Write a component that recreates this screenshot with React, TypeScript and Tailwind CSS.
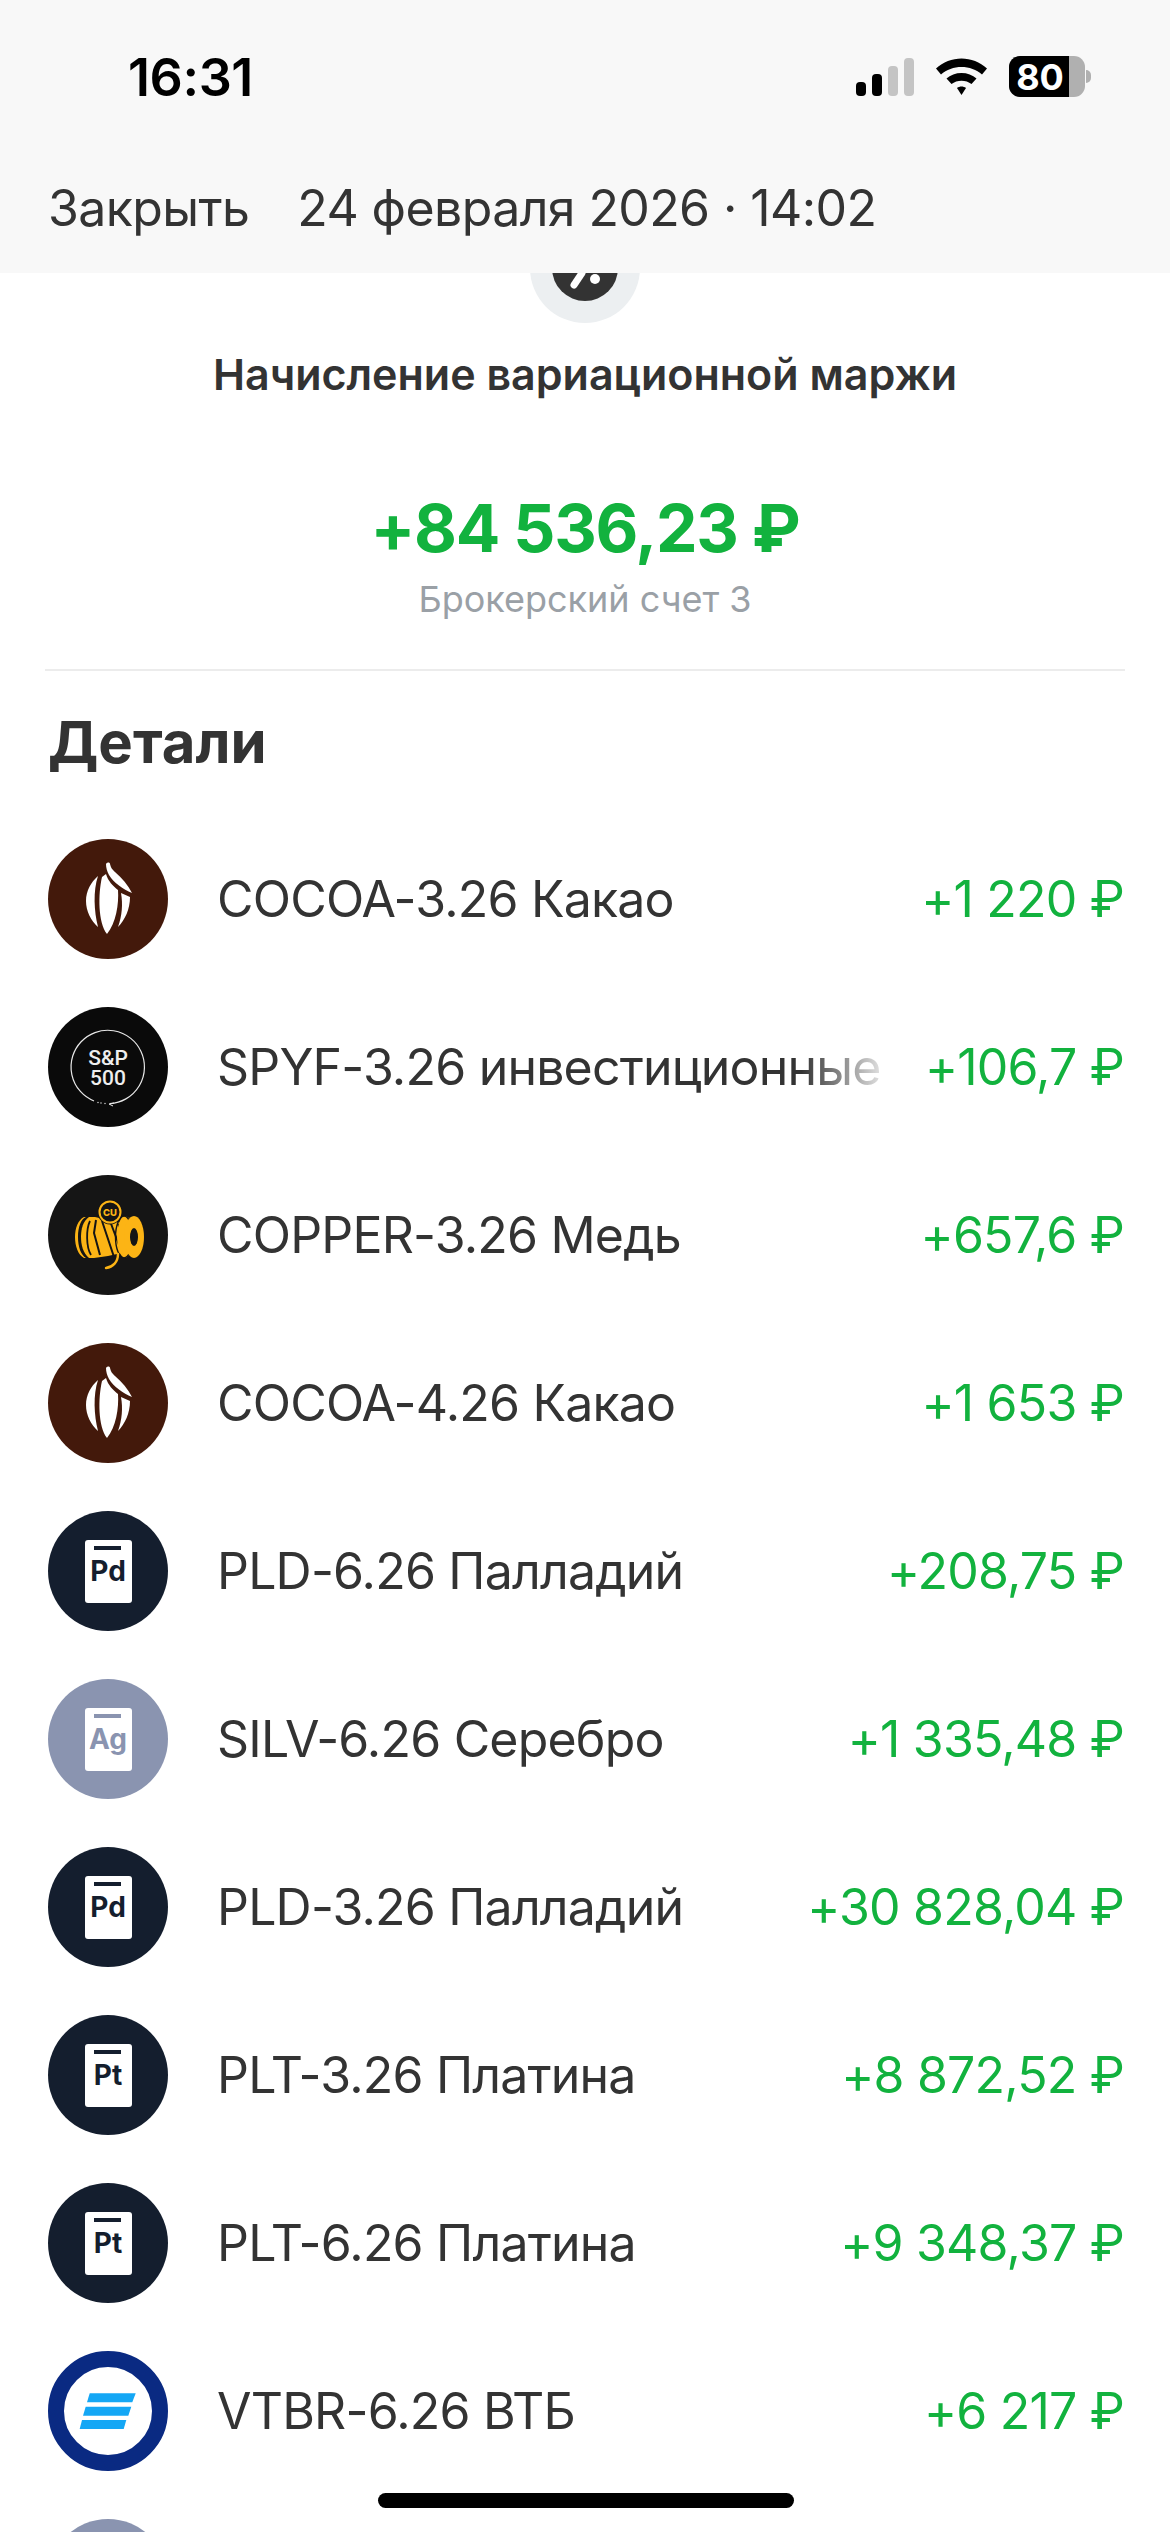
import React from "react";

function Cocoa() {
  return (
    <div className="w-[120px] h-[120px] shrink-0 rounded-full bg-[#43190b]">
      <svg viewBox="0 0 120 120" className="w-full h-full" fill="#ffffff">
        <path d="M58 25 C59 23 62 23 62 25 C63 29 64 30 67 33 C74 39 80 46 84 54 C75 50 66 44 61 36 C59 32 58 29 58 25 Z" />
        <path d="M50 37 C43 43 38 52 38 62 C38 72 43 82 50 88 C46 72 45 52 50 37 Z" />
        <path d="M54 38 L58 35 C60 42 65 47 70 51 C71 65 68 84 59 95 C50 84 50 55 54 38 Z" />
        <path d="M73 54 L82 58 C82 70 77 81 70 88 C74 77 75 65 73 54 Z" />
      </svg>
    </div>
  );
}

function Spx() {
  return (
    <div className="w-[120px] h-[120px] shrink-0 rounded-full bg-[#0a0a0a]">
      <svg viewBox="0 0 120 120" className="w-full h-full">
        <path d="M62 96.6 A36.7 36.7 0 1 0 46 94" fill="none" stroke="#e8e8e8" strokeWidth="1.2" />
        <path d="M66 96 L61 97 L65 99" fill="none" stroke="#e8e8e8" strokeWidth="1" />
        <circle cx="57" cy="96.5" r="0.7" fill="#e8e8e8" />
        <circle cx="53" cy="96" r="0.7" fill="#e8e8e8" />
        <circle cx="50" cy="95.5" r="0.7" fill="#e8e8e8" />
        <text x="60" y="58" textAnchor="middle" fontFamily="Roboto, sans-serif" fontWeight="500" fontSize="21" fill="#eeeeee">S&amp;P</text>
        <text x="60" y="77.5" textAnchor="middle" fontFamily="Roboto, sans-serif" fontWeight="500" fontSize="21" fill="#eeeeee">500</text>
      </svg>
    </div>
  );
}

function Copper() {
  return (
    <div className="w-[120px] h-[120px] shrink-0 rounded-full bg-[#151515]">
      <svg viewBox="0 0 120 120" className="w-full h-full">
        <path d="M30 62 C30 52 33 44 38 42 L36 42 C30 45 27 53 27 62 C27 71 30 80 36 83 L38 83 C33 80 30 72 30 62 Z" fill="#fcb415" />
        <path d="M41 42 L47 42 L78 49 L78 77 L60 81 L46 83 L41 83 C35 78 33 70 33 62 C33 54 35 46 41 42 Z" fill="#fcb415" />
        <path d="M42 46 C38 54 38 72 43 80" fill="none" stroke="#151515" strokeWidth="1.8" />
        <path d="M48 45 L46 58 L52 80 M54 46 L66 82 M62 46 L74 78 M70 49 L78 68" fill="none" stroke="#151515" strokeWidth="2" />
        <ellipse cx="77" cy="62" rx="8" ry="21" fill="#fcb415" />
        <ellipse cx="76" cy="62" rx="8.5" ry="21" fill="none" stroke="#151515" strokeWidth="1.4" />
        <ellipse cx="86" cy="62" rx="10" ry="21" fill="#fcb415" />
        <ellipse cx="86" cy="62" rx="4" ry="9" fill="#151515" />
        <path d="M70 79 C70 87 65 92 58 93" fill="none" stroke="#fcb415" strokeWidth="2.4" strokeLinecap="round" />
        <circle cx="62" cy="37" r="12.5" fill="#151515" />
        <circle cx="62" cy="37" r="10.5" fill="none" stroke="#fcb415" strokeWidth="2" />
        <text x="62" y="40.5" textAnchor="middle" fontFamily="Inter, sans-serif" fontWeight="800" fontSize="9.5" fill="#fcb415">CU</text>
      </svg>
    </div>
  );
}

function Metal({ label, light }: { label: string; light?: boolean }) {
  return (
    <div className={light ? "w-[120px] h-[120px] shrink-0 rounded-full bg-[#8a94b0] flex items-center justify-center" : "w-[120px] h-[120px] shrink-0 rounded-full bg-[#141e2e] flex items-center justify-center"}>
      <div className="w-[47px] h-[63px] bg-white rounded-[3px] flex flex-col items-center pt-[6px]">
        <div className={light ? "w-[27px] h-[4px] mr-[1px] bg-[#8a94b0]" : "w-[27px] h-[4px] mr-[1px] bg-[#141e2e]"} />
        <div className={light ? "mt-[5px] text-[28px] leading-[32px] font-bold text-[#8a94b0]" : "mt-[5px] text-[28px] leading-[32px] font-bold text-[#141e2e]"}>{label}</div>
      </div>
    </div>
  );
}

function Vtb() {
  return (
    <div className="w-[120px] h-[120px] shrink-0 rounded-full bg-white border-[16px] border-[#0a2a82] flex items-center justify-center">
      <svg viewBox="16 16 88 88" className="w-[88px] h-[88px]" fill="#14a7f5">
        <polygon points="41.7,42.3 87.7,42.3 84.3,51.3 39,51.3" />
        <polygon points="37.7,55.7 83.3,55.7 80.3,64.7 35,64.7" />
        <polygon points="34,69 78.3,69 75.7,78 31.7,78" />
      </svg>
    </div>
  );
}

const rows: { icon: React.ReactNode; name: string; amount: string; fade?: boolean }[] = [
  { icon: <Cocoa />, name: "COCOA-3.26 Какао", amount: "+1 220 ₽" },
  { icon: <Spx />, name: "SPYF-3.26 инвестиционные", amount: "+106,7 ₽", fade: true },
  { icon: <Copper />, name: "COPPER-3.26 Медь", amount: "+657,6 ₽" },
  { icon: <Cocoa />, name: "COCOA-4.26 Какао", amount: "+1 653 ₽" },
  { icon: <Metal label="Pd" />, name: "PLD-6.26 Палладий", amount: "+208,75 ₽" },
  { icon: <Metal label="Ag" light />, name: "SILV-6.26 Серебро", amount: "+1 335,48 ₽" },
  { icon: <Metal label="Pd" />, name: "PLD-3.26 Палладий", amount: "+30 828,04 ₽" },
  { icon: <Metal label="Pt" />, name: "PLT-3.26 Платина", amount: "+8 872,52 ₽" },
  { icon: <Metal label="Pt" />, name: "PLT-6.26 Платина", amount: "+9 348,37 ₽" },
  { icon: <Vtb />, name: "VTBR-6.26 ВТБ", amount: "+6 217 ₽" },
  { icon: <Metal label="Ag" light />, name: "", amount: "" },
];

export default function App() {
  return (
    <div className="relative w-[1170px] h-[2532px] overflow-hidden bg-white font-['Inter',sans-serif] text-[#333333]">
      <header className="relative z-10 h-[273px] bg-[#f8f8f8] flex flex-col">
        <div className="h-[178px] flex items-start justify-between pl-[128px] pr-[79px] pt-[48px]">
          <span className="text-[52px] leading-[60px] font-semibold text-black tracking-[-0.4px]">16:31</span>
          <div className="flex items-center gap-[22px] mt-[8px]">
            <svg width="58" height="38" viewBox="0 0 58 38">
              <rect x="0" y="24" width="10" height="14" rx="4" fill="#000" />
              <rect x="16" y="16" width="10" height="22" rx="4" fill="#000" />
              <rect x="32" y="8" width="10" height="30" rx="4" fill="#c4c4c4" />
              <rect x="48" y="0" width="10" height="38" rx="4" fill="#c4c4c4" />
            </svg>
            <svg width="51" height="38" viewBox="0 0 51 38">
              <path d="M0 10.5 C14 -3 37 -3 51 10.5 L46 16.5 C35 6.5 16 6.5 5 16.5 Z" fill="#000" />
              <path d="M10.5 20.5 C18 13 33 13 40.5 20.5 L35.5 26 C30 21.5 21 21.5 15.5 26 Z" fill="#000" />
              <path d="M21 30 C23.5 28 27.5 28 30 30 L25.5 37 Z" fill="#000" />
            </svg>
            <div className="flex items-center">
              <div className="relative w-[76px] h-[41px] rounded-[11px] overflow-hidden bg-[#b0b0b0]">
                <div className="w-[60px] h-full bg-black flex items-center justify-center pl-[2px]">
                  <span className="text-[36px] leading-none font-bold text-white">80</span>
                </div>
              </div>
              <div className="w-[5px] h-[13px] ml-[1px] rounded-r-full bg-[#b0b0b0]" />
            </div>
          </div>
        </div>
        <div className="flex items-center pl-[48px] gap-[48px] h-[60px] text-[50px] leading-[60px] tracking-[-0.6px] text-[#333333]">
          <span>Закрыть</span>
          <span>24 февраля 2026 · 14:02</span>
        </div>
      </header>

      <main className="flex flex-col">
        <div className="mt-[-60px] self-center w-[110px] h-[110px] rounded-full bg-[#eceff1] flex items-center justify-center">
          <svg viewBox="0 0 66 66" className="w-[66px] h-[66px]">
            <circle cx="33" cy="33" r="33" fill="#333333" />
            <path d="M22 50 L30 38" stroke="#ffffff" strokeWidth="7" strokeLinecap="round" />
            <circle cx="43" cy="44" r="5" fill="#ffffff" />
          </svg>
        </div>
        <h1 className="mt-[25px] text-center text-[43px] leading-[52px] font-semibold">Начисление вариационной маржи</h1>
        <div className="mt-[88px] text-center text-[66px] leading-[80px] font-bold tracking-[-1.3px] text-[#12b23e]">+84 536,23 ₽</div>
        <div className="mt-[9px] text-center text-[36px] leading-[44px] text-[#9aa0a6]">Брокерский счет 3</div>
        <div className="mx-[45px] mt-[48px] h-[2px] bg-[#ececec]" />
        <h2 className="mt-[35px] pl-[48px] text-[58px] leading-[72px] font-bold">Детали</h2>
        <div className="mt-[61px] pl-[48px] pr-[46px] flex flex-col gap-[48px]">
          {rows.map((r, i) => (
            <div key={i} className="flex items-center h-[120px]">
              {r.icon}
              <div className={r.fade ? "ml-[49px] w-[664px] overflow-hidden whitespace-nowrap text-[50px] leading-[60px] tracking-[-0.8px] [mask-image:linear-gradient(to_right,#000_88%,rgba(0,0,0,0.15)_100%)]" : "ml-[49px] flex-1 overflow-hidden whitespace-nowrap text-[50px] leading-[60px] tracking-[-0.8px]"}>
                {r.name}
              </div>
              <div className="ml-auto whitespace-nowrap text-[50px] leading-[60px] tracking-[-0.8px] text-[#12b23e]">{r.amount}</div>
            </div>
          ))}
        </div>
      </main>

      <div className="absolute left-[378px] top-[2493px] w-[416px] h-[15px] rounded-full bg-black" />
    </div>
  );
}
